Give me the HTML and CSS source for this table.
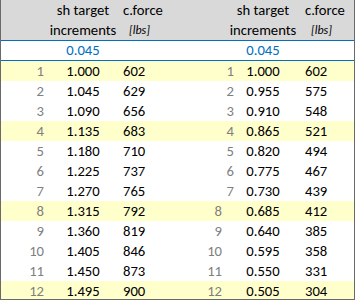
FILE: index.html
```html
<!DOCTYPE html>
<html>
<head>
<meta charset="utf-8">
<link rel="stylesheet" href="styles.css">
</head>
<body>
<div class="sheet">
  <div class="head">
    <div class="row">
      <span></span><span class="val">sh target</span><span class="force">c.force</span>
      <span></span><span class="val">sh target</span><span class="force">c.force</span>
    </div>
    <div class="row">
      <span></span><span class="val">increments</span><span class="force unit">[lbs]</span>
      <span></span><span class="val">increments</span><span class="force unit">[lbs]</span>
    </div>
  </div>
  <div class="row inc">
    <span></span><span class="val blue">0.045</span><span></span>
    <span></span><span class="val blue">0.045</span><span></span>
  </div>
  <div class="row hl"><span class="idx">1</span><span class="val">1.000</span><span class="force">602</span><span class="idx shift">1</span><span class="val">1.000</span><span class="force">602</span></div>
  <div class="row"><span class="idx">2</span><span class="val">1.045</span><span class="force">629</span><span class="idx shift">2</span><span class="val">0.955</span><span class="force">575</span></div>
  <div class="row"><span class="idx">3</span><span class="val">1.090</span><span class="force">656</span><span class="idx shift">3</span><span class="val">0.910</span><span class="force">548</span></div>
  <div class="row hl"><span class="idx">4</span><span class="val">1.135</span><span class="force">683</span><span class="idx shift">4</span><span class="val">0.865</span><span class="force">521</span></div>
  <div class="row"><span class="idx">5</span><span class="val">1.180</span><span class="force">710</span><span class="idx shift">5</span><span class="val">0.820</span><span class="force">494</span></div>
  <div class="row"><span class="idx">6</span><span class="val">1.225</span><span class="force">737</span><span class="idx shift">6</span><span class="val">0.775</span><span class="force">467</span></div>
  <div class="row"><span class="idx">7</span><span class="val">1.270</span><span class="force">765</span><span class="idx shift">7</span><span class="val">0.730</span><span class="force">439</span></div>
  <div class="row hl"><span class="idx">8</span><span class="val">1.315</span><span class="force">792</span><span class="idx">8</span><span class="val">0.685</span><span class="force">412</span></div>
  <div class="row"><span class="idx">9</span><span class="val">1.360</span><span class="force">819</span><span class="idx">9</span><span class="val">0.640</span><span class="force">385</span></div>
  <div class="row"><span class="idx">10</span><span class="val">1.405</span><span class="force">846</span><span class="idx">10</span><span class="val">0.595</span><span class="force">358</span></div>
  <div class="row"><span class="idx">11</span><span class="val">1.450</span><span class="force">873</span><span class="idx">11</span><span class="val">0.550</span><span class="force">331</span></div>
  <div class="row hl"><span class="idx">12</span><span class="val">1.495</span><span class="force">900</span><span class="idx">12</span><span class="val">0.505</span><span class="force">304</span></div>
</div>
</body>
</html>
```
FILE: styles.css
```css
html, body {
  margin: 0;
  padding: 0;
  background: #ffffff;
}
.sheet {
  box-sizing: border-box;
  width: 355px;
  height: 300px;
  border-left: 1px solid #6a6a6a;
  border-right: 1px solid #6a6a6a;
  border-bottom: 1px solid #6a6a6a;
  overflow: hidden;
  font-family: Carlito, "Open Sans", sans-serif;
  font-size: 14.67px;
  color: #000;
}
.row {
  display: grid;
  grid-template-columns: 43px 78px 56px 44px 82px 1fr;
  height: 20px;
  line-height: 20px;
  white-space: nowrap;
}
.head {
  background: #d9d9d9;
  height: 40px;
  border-bottom: 1px solid #0070c0;
}
.inc {
  height: 19px;
  line-height: 19px;
  border-bottom: 1px solid #0070c0;
}
.hl {
  background: #ffffcc;
}
.idx {
  text-align: right;
  color: #7f7f7f;
}
.idx.shift {
  margin-right: -12px;
}
.val {
  text-align: center;
}
.force {
  padding-left: 1px;
}
.unit {
  font-style: italic;
  font-size: 12px;
  padding-left: 7px;
}
.blue {
  color: #0070c0;
}
```
